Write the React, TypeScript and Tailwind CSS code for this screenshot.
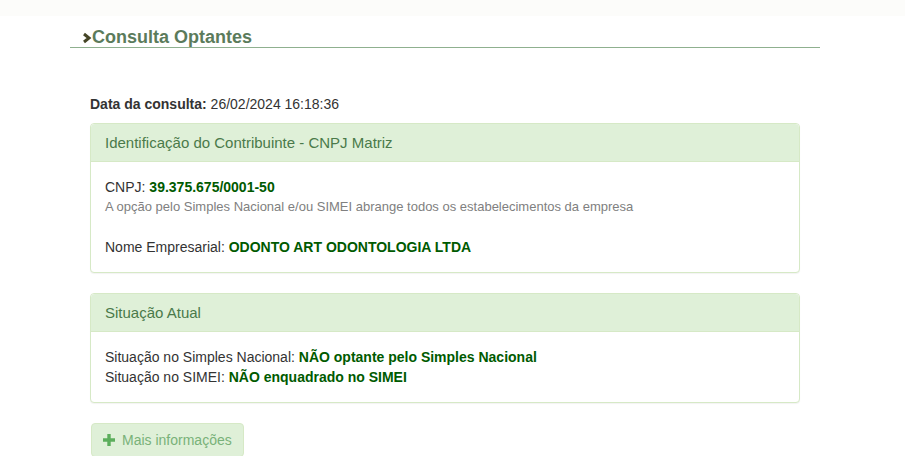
import React from 'react';

const Panel: React.FC<{ title: string; children: React.ReactNode }> = ({ title, children }) => (
  <div className="mb-5 rounded border border-[#d6e9c6] bg-white shadow-[0_1px_1px_rgba(0,0,0,0.05)]">
    <div className="rounded-t border-b border-[#d6e9c6] bg-[#dff0d8] px-[14px] py-[9px] text-[15px] leading-[19px] text-[#4a7a4a]">
      {title}
    </div>
    <div className="px-[14px] py-[15px]">{children}</div>
  </div>
);

export default function App() {
  return (
    <div className="min-h-screen bg-white font-['Liberation_Sans',Arial,sans-serif] text-[14px] leading-[20px] text-[#333]">
      <div className="h-4 bg-[#fcfcfa]" />
      <div className="ml-[70px] w-[750px]">
        <h2 className="mt-[11px] flex items-center border-b border-[#8fb08f] pl-[12px] text-[18px] font-bold leading-[20px] text-[#5b7b5b]">
          <svg width="10" height="12" viewBox="0 0 10 12" className="mt-[2px]">
            <path d="M2 2 L7 6 L2 10" fill="none" stroke="#454526" strokeWidth="3" />
          </svg>
          Consulta Optantes
        </h2>
        <div className="px-5 pt-[46px]">
          <p className="mb-[9px]">
            <b>Data da consulta:</b> 26/02/2024 16:18:36
          </p>
          <Panel title="Identificação do Contribuinte - CNPJ Matriz">
            <div>
              CNPJ: <b className="text-[#005a00]">39.375.675/0001-50</b>
            </div>
            <div className="text-[13px] text-[#808080]">
              A opção pelo Simples Nacional e/ou SIMEI abrange todos os estabelecimentos da empresa
            </div>
            <br />
            <div>
              Nome Empresarial: <b className="text-[#005a00]">ODONTO ART ODONTOLOGIA LTDA</b>
            </div>
          </Panel>
          <Panel title="Situação Atual">
            <div>
              Situação no Simples Nacional: <b className="text-[#005a00]">NÃO optante pelo Simples Nacional</b>
            </div>
            <div>
              Situação no SIMEI: <b className="text-[#005a00]">NÃO enquadrado no SIMEI</b>
            </div>
          </Panel>
          <button className="mt-[1px] ml-[1px] flex items-center gap-[7px] rounded border border-[#d6e9c6] bg-[#dff0d8] px-[11px] py-[6px] text-[14px] leading-[20px] text-[#79b279]">
            <svg width="12" height="12" viewBox="0 0 12 12">
              <path d="M4.3 0h3.4v4.3H12v3.4H7.7V12H4.3V7.7H0V4.3h4.3z" fill="#5cae5c" />
            </svg>
            Mais informações
          </button>
        </div>
      </div>
    </div>
  );
}
